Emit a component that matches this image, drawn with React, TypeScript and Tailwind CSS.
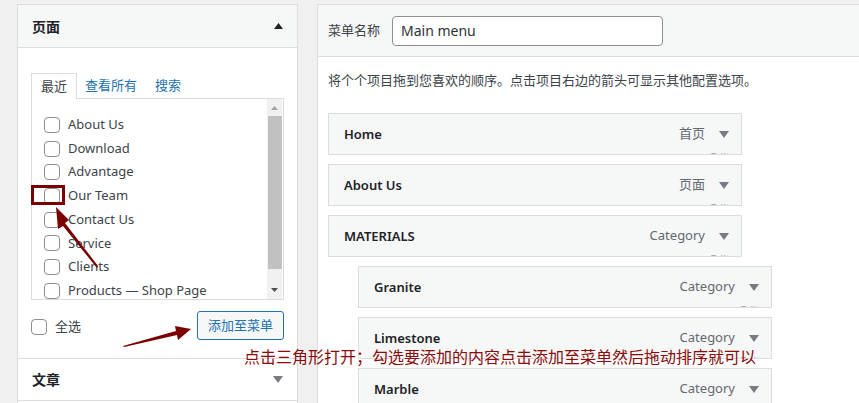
import React from "react";

const FONT = "font-['Noto_Sans','Noto_Sans_CJK_SC',sans-serif]";

function Checkbox() {
  return <span className="inline-block w-4 h-4 shrink-0 rounded-[4px] border border-[#8c8f94] bg-white" />;
}

function TriDown({ color = "#787c82" }: { color?: string }) {
  return (
    <svg width="10" height="7" viewBox="0 0 10 7" className="shrink-0">
      <polygon points="0,0 10,0 5,7" fill={color} />
    </svg>
  );
}

function TriUp() {
  return (
    <svg width="9" height="6" viewBox="0 0 9 6" className="shrink-0">
      <polygon points="0,6 9,6 4.5,0" fill="#1d2327" />
    </svg>
  );
}

const pages = ["About Us", "Download", "Advantage", "Our Team", "Contact Us", "Service", "Clients", "Products — Shop Page"];

function MenuItem({ title, type, indent }: { title: string; type: string; indent?: boolean }) {
  return (
    <div
      className={`relative h-[42px] w-[414px] mb-[9px] border border-[#dcdcde] bg-[#f6f7f7] overflow-hidden flex items-center pl-[15px] pr-[12px] ${indent ? "ml-[40px]" : "ml-[10px]"}`}
    >
      <span className="text-[13px] font-semibold text-[#1d2327] flex-1 pt-[1px]">{title}</span>
      <span className="text-[13px] text-[#646970] mr-[14px]">{type}</span>
      <TriDown />
      <span className="absolute right-[11px] top-[37px] text-[11px] text-[#a7aaad] leading-none">Edit</span>
    </div>
  );
}

export default function App() {
  return (
    <div className={`relative w-[859px] h-[403px] overflow-hidden bg-[#f0f0f1] ${FONT} text-[#3c434a]`}>
      <div className="flex pt-[4px] pl-[17px] gap-[19px]">
        {/* Left panel */}
        <div className="w-[281px] shrink-0 border border-[#dcdcde] bg-white">
          <div className="h-[43px] bg-[#f6f7f7] border-b border-[#dcdcde] flex items-center justify-between pl-[14px] pr-[14px]">
            <span className="text-[14px] font-semibold text-[#1d2327]">页面</span>
            <TriUp />
          </div>
          <div className="px-[13px] pt-[24px] pb-[18px] border-b border-[#dcdcde]">
            <div className="flex items-end h-[26px] text-[13px]">
              <div className="relative z-10 h-[26px] w-[46px] border border-b-0 border-[#dcdcde] bg-white flex items-center justify-center -mb-px text-[#3c434a]">
                最近
              </div>
              <span className="ml-[8px] h-[25px] flex items-center text-[#2271b1]">查看所有</span>
              <span className="ml-[18px] h-[25px] flex items-center text-[#2271b1]">搜索</span>
            </div>
            <div className="relative h-[202px] border border-[#dcdcde] bg-white overflow-hidden flex">
              <div className="flex-1 pt-[14px] pl-[12px]">
                {pages.map((p) => (
                  <div key={p} className="h-[23.7px] flex items-center gap-[8px] text-[13px] text-[#3c434a] whitespace-nowrap">
                    <Checkbox />
                    <span>{p}</span>
                  </div>
                ))}
              </div>
              <div className="w-[15px] shrink-0 bg-[#f1f1f1] flex flex-col items-center mr-[1px]">
                <div className="h-[17px] flex items-center justify-center">
                  <svg width="7" height="4" viewBox="0 0 7 4"><polygon points="0,4 7,4 3.5,0" fill="#a3a3a3" /></svg>
                </div>
                <div className="w-[14px] h-[153px] bg-[#c1c1c1]" />
                <div className="flex-1 flex items-end justify-center pb-[7px]">
                  <svg width="7" height="4" viewBox="0 0 7 4"><polygon points="0,0 7,0 3.5,4" fill="#505050" /></svg>
                </div>
              </div>
            </div>
            <div className="flex items-center justify-between mt-[11px]">
              <div className="flex items-center gap-[8px] text-[13px] pt-[3px]">
                <Checkbox />
                <span>全选</span>
              </div>
              <div className="h-[29px] w-[87px] rounded-[3px] border border-[#2271b1] bg-[#f6f7f7] text-[#2271b1] text-[13px] flex items-center justify-center">
                添加至菜单
              </div>
            </div>
          </div>
          <div className="h-[42px] border-b border-[#dcdcde] flex items-center justify-between pl-[14px] pr-[14px]">
            <span className="text-[14px] font-semibold text-[#1d2327]">文章</span>
            <TriDown />
          </div>
        </div>

        {/* Right panel */}
        <div className="flex-1 border-l border-t border-[#dcdcde] bg-white h-[420px]">
          <div className="h-[52px] bg-[#f6f7f7] border-b border-[#dcdcde] flex items-center pl-[10px]">
            <span className="text-[13px] text-[#3c434a]">菜单名称</span>
            <div className="ml-[12px] h-[30px] w-[271px] rounded-[4px] border border-[#8c8f94] bg-white flex items-center pl-[8px] text-[14px] text-[#2c3338]">
              Main menu
            </div>
          </div>
          <div className="pt-[13px]">
            <p className="pl-[10px] h-[20px] leading-[20px] text-[13px] text-[#3c434a]">
              将个个项目拖到您喜欢的顺序。点击项目右边的箭头可显示其他配置选项。
            </p>
            <div className="mt-[23px]">
              <MenuItem title="Home" type="首页" />
              <MenuItem title="About Us" type="页面" />
              <MenuItem title="MATERIALS" type="Category" />
              <MenuItem title="Granite" type="Category" indent />
              <MenuItem title="Limestone" type="Category" indent />
              <MenuItem title="Marble" type="Category" indent />
            </div>
          </div>
        </div>
      </div>

      {/* Annotations */}
      <div className="absolute left-[31px] top-[185px] w-[34px] h-[20px] border-[3px] border-[#7b0000]" />
      <svg className="absolute left-0 top-0" width="859" height="403" viewBox="0 0 859 403">
        <polygon points="97,268 63,226 58,229 56,207 69,220 65,223 98,266" fill="#7b0000" />
        <polygon points="123,346 176,331 175,326 191,329 178,340 177,335 124,347" fill="#7b0000" />
      </svg>
      <div className="absolute left-[244px] top-[346px] text-[16px] leading-[22px] text-[#8b0a0a] whitespace-nowrap">
        点击三角形打开；勾选要添加的内容点击添加至菜单然后拖动排序就可以
      </div>
    </div>
  );
}
